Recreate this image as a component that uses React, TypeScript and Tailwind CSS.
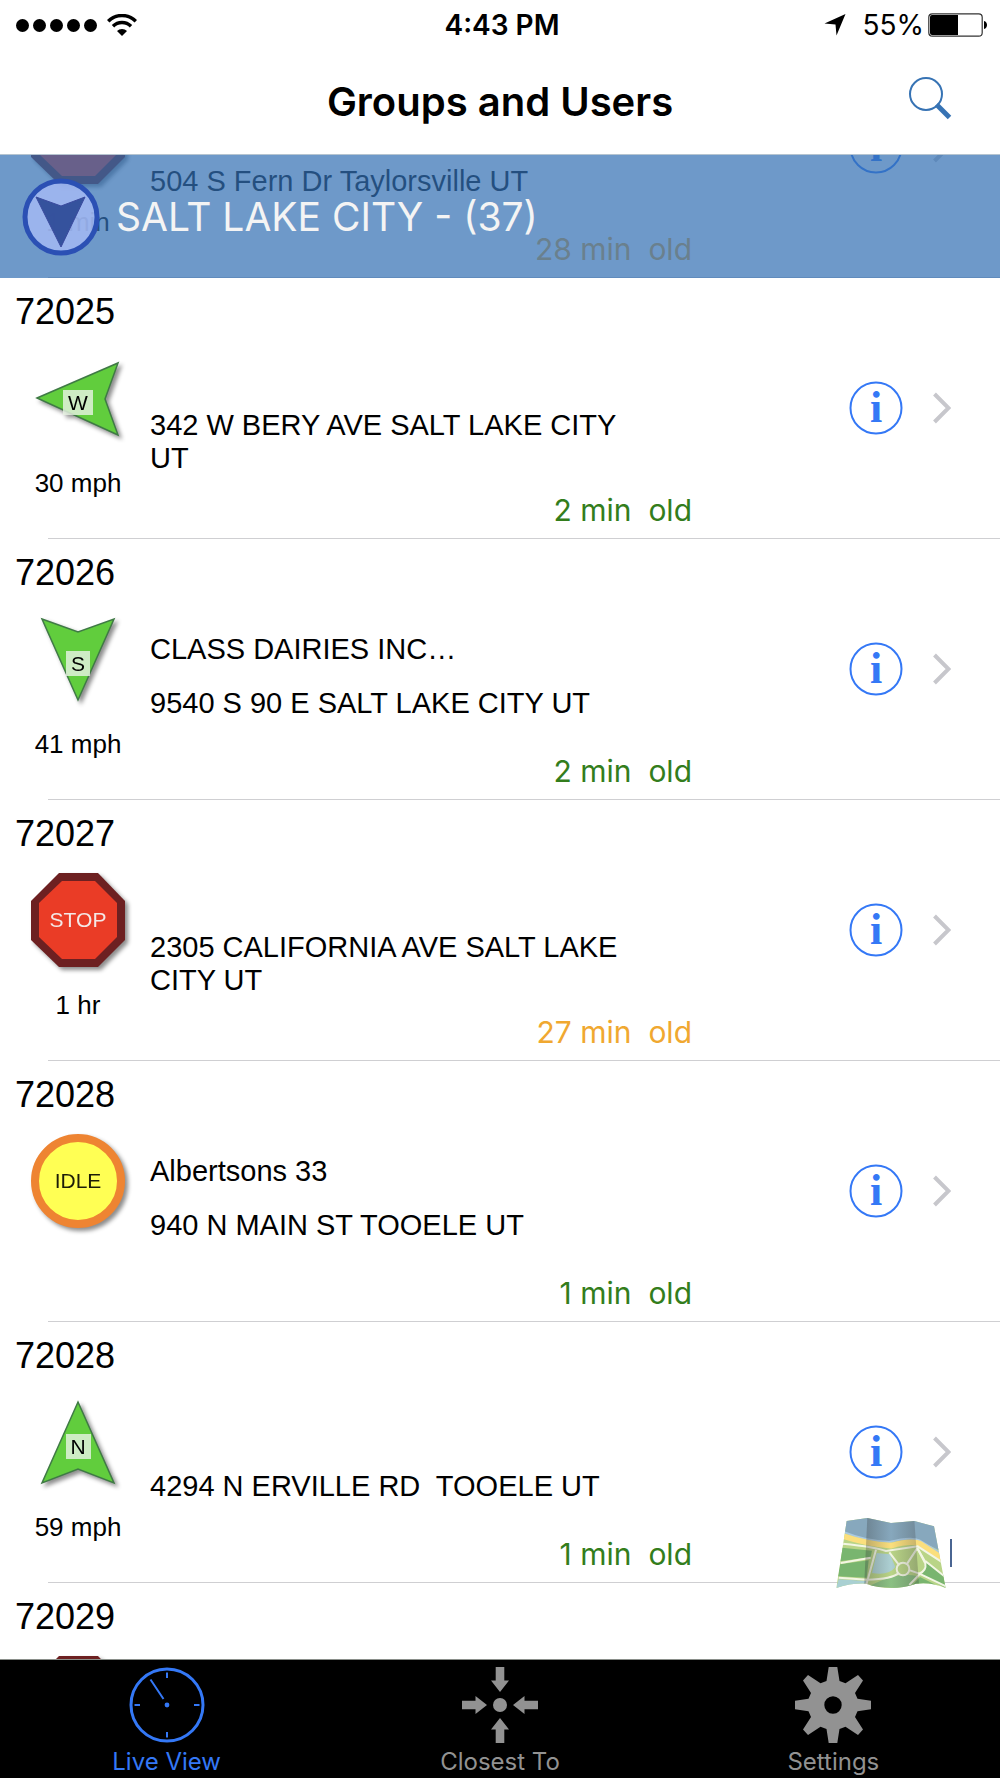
import React from 'react';

type Status = 'north' | 'south' | 'west' | 'stop' | 'idle';

interface Unit {
  id: string;
  status: Status;
  detail?: string;
  place?: string;
  address: string;
  age: string;
  late?: boolean;
}

const units: Unit[] = [
  { id: '72024', status: 'stop', detail: '1 min', address: '504 S Fern Dr Taylorsville UT', age: '28 min', late: true },
  { id: '72025', status: 'west', detail: '30 mph', address: '342 W BERY AVE SALT LAKE CITY UT', age: '2 min' },
  { id: '72026', status: 'south', detail: '41 mph', place: 'CLASS DAIRIES INC…', address: '9540 S 90 E SALT LAKE CITY UT', age: '2 min' },
  { id: '72027', status: 'stop', detail: '1 hr', address: '2305 CALIFORNIA AVE SALT LAKE CITY UT', age: '27 min', late: true },
  { id: '72028', status: 'idle', place: 'Albertsons 33', address: '940 N MAIN ST TOOELE UT', age: '1 min' },
  { id: '72028', status: 'north', detail: '59 mph', address: '4294 N ERVILLE RD  TOOELE UT', age: '1 min' },
  { id: '72029', status: 'stop', address: '', age: '' },
];

const arrows = {
  north: { points: '50,10 86,91 50,77 14,91', letter: 'N', x: 38, w: 25 },
  south: { points: '14,10 50,23 86,10 50,91', letter: 'S', x: 38, w: 24 },
  west: { points: '9,50 90,15 77,51 90,87', letter: 'W', x: 35, w: 30 },
};

const StatusIcon = ({ status }: { status: Status }) => {
  const shape = "size-[100px] drop-shadow-[3px_3px_2px_rgba(0,0,0,0.45)] font-['Liberation_Sans',sans-serif] text-[21px]";

  if (status === 'stop') {
    return (
      <svg viewBox="0 0 100 100" className={shape}>
        <polygon points="31,3 70,3 97,31 97,70 70,97 31,97 3,70 3,31" fill="#6d2021" />
        <polygon points="34,11 67,11 89,33 89,67 67,89 34,89 11,67 11,33" fill="#ea3c26" />
        <text x="50" y="57" textAnchor="middle" fill="#f4e8e6">STOP</text>
      </svg>
    );
  }

  if (status === 'idle') {
    return (
      <svg viewBox="0 0 100 100" className={shape}>
        <circle cx="50" cy="50" r="43" fill="#ffff54" stroke="#ee8432" strokeWidth="8" />
        <text x="50" y="57" textAnchor="middle" fill="#1c1c08">IDLE</text>
      </svg>
    );
  }

  const { points, letter, x, w } = arrows[status];
  return (
    <svg viewBox="0 0 100 100" className={shape}>
      <polygon points={points} fill="#61cd3d" stroke="#3f7a45" strokeWidth="1.5" />
      <rect x={x} y="42" width={w} height="25" fill="#e6f3e2" fillOpacity="0.82" />
      <text x="50" y="62" textAnchor="middle">{letter}</text>
    </svg>
  );
};

const InfoIcon = () => (
  <svg viewBox="0 0 54 54" className="size-[54px] text-[#3478f6]">
    <circle cx="27" cy="27" r="25.5" fill="none" stroke="currentColor" strokeWidth="2" />
    <text x="27" y="41" textAnchor="middle" fill="currentColor" className="font-['Liberation_Serif',serif] text-[44px] font-bold">i</text>
  </svg>
);

const UnitRow = ({ unit }: { unit: Unit }) => (
  <li>
    <div className="flex h-[260px]">
      <div className="w-[150px] shrink-0 pt-[14px]">
        <h2 className="pl-[15px] text-[36px] leading-[40px]">{unit.id}</h2>
        <div className="mt-4 flex flex-col items-center pl-[6px]">
          <StatusIcon status={unit.status} />
          <p className="mt-[19px] text-[26px] leading-[32px]">{unit.detail}</p>
        </div>
      </div>
      <div className="flex min-w-0 flex-1 flex-col pt-[94px] text-[29px] leading-[33px]">
        <p className="h-[33px]">{unit.place}</p>
        <p className="mt-1 flex h-[66px] max-w-[490px] items-center whitespace-pre-wrap">{unit.address}</p>
        {unit.age && (
          <p className={`mt-[17px] text-right font-[Inter,sans-serif] text-[30px] leading-[36px] whitespace-pre ${unit.late ? 'text-[#f0a830]' : 'text-[#337d1c]'}`}>
            {unit.age}{'  '}old
          </p>
        )}
      </div>
      <div className="ml-[157px] flex shrink-0 items-center gap-[30px] pr-[49px]">
        <button type="button" aria-label={`Details for ${unit.id}`}>
          <InfoIcon />
        </button>
        <svg viewBox="0 0 18 32" className="h-[32px] w-[18px]" fill="none" stroke="#c7c7cc" strokeWidth="4">
          <path d="M1.5 2l14 14-14 14" />
        </svg>
      </div>
    </div>
    <div className="ml-12 h-px bg-[#cfcfd2]" />
  </li>
);

const StatusBar = () => (
  <div className="grid h-[50px] grid-cols-[1fr_auto_1fr] items-center pr-3 pl-4 font-[Inter,sans-serif] text-[28px] leading-[32px]">
    <div className="flex items-center gap-[10px]">
      <svg viewBox="0 0 81 13" className="h-[13px] w-[81px]">
        {[6.5, 23.5, 40.5, 57.5, 74.5].map((cx) => <circle key={cx} cx={cx} cy="6.5" r="6.5" />)}
      </svg>
      <svg viewBox="0 0 30 22" className="h-[22px] w-[30px]" fill="none" stroke="black" strokeWidth="3.4">
        <path d="M1.2 7.2a19.5 19.5 0 0 1 27.6 0" />
        <path d="M6 12.3a12.7 12.7 0 0 1 18 0" />
        <path d="M15 22l-5-5a7 7 0 0 1 10 0z" fill="black" stroke="none" />
      </svg>
    </div>
    <div className="text-center font-semibold">4:43 PM</div>
    <div className="flex items-center justify-end">
      <svg viewBox="0 0 22 22" className="mr-4 size-[22px]">
        <path d="M21.5 0L12.5 21.5 11.5 10.5 0.5 9.5z" />
      </svg>
      <span className="mr-1">55%</span>
      <svg viewBox="0 0 60 24" className="h-[24px] w-[60px]">
        <rect x="0.8" y="0.8" width="53.4" height="22.4" rx="3.5" fill="none" stroke="#333" strokeWidth="1.2" />
        <path d="M4 2h26v20H4a2 2 0 0 1-2-2V4a2 2 0 0 1 2-2z" />
        <path d="M56 8c4 1 4 7 0 8z" />
      </svg>
    </div>
  </div>
);

const MapIcon = () => (
  <svg viewBox="0 0 330 216" className="h-[72px] w-[110px]">
    <defs>
      <clipPath id="sheet">
        <path d="M32 12L94 3 165 18 235 12 294 28 329 213 Q285 194 240 200 Q165 226 90 200 Q45 198 1 213z" />
      </clipPath>
      <linearGradient id="foldA" x1="0" x2="1">
        <stop offset="0" stopColor="#333" stopOpacity="0.32" />
        <stop offset="1" stopColor="#333" stopOpacity="0" />
      </linearGradient>
      <linearGradient id="foldB" x1="0" x2="1">
        <stop offset="0" stopColor="#333" stopOpacity="0" />
        <stop offset="1" stopColor="#333" stopOpacity="0.28" />
      </linearGradient>
    </defs>
    <g clipPath="url(#sheet)">
      <rect width="330" height="216" fill="#b9d487" />
      <path d="M20 0H330V110L290 90Q240 62 160 75Q90 70 28 48z" fill="#87a8bd" />
      <path d="M26 46Q90 72 160 75Q225 58 250 70L320 112" fill="none" stroke="#a9c9e0" strokeWidth="6" />
      <path d="M24 58Q90 80 165 86Q230 68 255 82L320 125" fill="none" stroke="#fbdf7d" strokeWidth="17" />
      <path d="M18 92L108 101 104 120 12 133z" fill="#79b56f" />
      <path d="M12 142L98 130 92 182 6 178z" fill="#79b56f" />
      <path d="M8 187L92 192 86 205 0 214z" fill="#a9d0d2" />
      <path d="M122 108L162 112 178 150Q160 176 108 168z" fill="#add0d3" />
      <path d="M270 138L322 172 330 214 258 172z" fill="#79b56f" />
      <path d="M98 208Q190 160 245 178L220 216z" fill="#8bc083" />
      <path d="M252 180L320 214 225 208z" fill="#79b56f" />
      <g fill="none" stroke="#f3f6e4" strokeWidth="6">
        <path d="M20 80Q120 90 150 102L245 88 L325 140" />
        <path d="M14 138L104 122M8 182L92 188 Q170 186 188 168 M120 98L90 206" />
        <path d="M160 106L190 145M245 92L212 142M245 95L268 135M222 160L250 170M250 170L330 208M250 172L220 204" />
        <path d="M245 95Q258 120 268 140Q272 160 250 170M268 132L328 180" />
        <circle cx="201" cy="156" r="19" />
      </g>
      <path d="M94 0L165 16V216H84z" fill="url(#foldA)" />
      <path d="M165 16L235 10 250 216H165z" fill="url(#foldB)" />
    </g>
  </svg>
);

const tabs = [
  {
    label: 'Live View',
    active: true,
    icon: (
      <g fill="none" stroke="currentColor" strokeWidth="2">
        <circle r="36" strokeWidth="3" />
        <path d="M0-32.500v5.500M0 32.500v-5.500M-32.500 0h5.500M32.500 0h-5.500M-16.500-25.500L-3.500-6" />
        <circle r="2.400" fill="currentColor" stroke="none" />
      </g>
    ),
  },
  {
    label: 'Closest To',
    icon: (
      <g fill="currentColor">
        <circle r="7" />
        {[0, 90, 180, 270].map((deg) => (
          <path key={deg} transform={`rotate(${deg})`} d="M-38-4.300H-24.500V-9L-13 0-24.500 9V4.300H-38z" />
        ))}
      </g>
    ),
  },
  {
    label: 'Settings',
    icon: (
      <path
        fill="currentColor"
        fillRule="evenodd"
        d="M-4.300-38H4.300L6.500-24 12.500-21.700 25-30 30-24.500 22-12 24.500-6.300 38-4.300V4.300L24.500 6.300 22 12 30 24.500 25 30 12.500 21.700 6.500 24 4.300 38H-4.300L-6.500 24-12.500 21.700-25 30-30 24.500-22 12-24.500 6.300-38 4.300V-4.300L-24.500-6.300-22-12-30-24.500-25-30-12.500-21.700-6.500-24zM-8.700 0a8.700 8.700 0 1 0 17.400 0a8.700 8.700 0 1 0-17.400 0z"
      />
    ),
  },
];

export default function App() {
  return (
    <div className="flex h-screen flex-col bg-white font-['Liberation_Sans',sans-serif] text-black">
      <header className="border-b border-[#b5c4d0]">
        <StatusBar />
        <div className="grid h-[104px] grid-cols-[1fr_auto_1fr] items-center px-12">
          <h1 className="col-start-2 font-[Inter,sans-serif] text-[40px] font-semibold leading-[48px]">Groups and Users</h1>
          <button type="button" aria-label="Search" className="justify-self-end pb-2">
            <svg viewBox="0 0 44 44" className="size-[44px]" fill="none" stroke="#3773b4">
              <circle cx="18" cy="18" r="16" strokeWidth="2" />
              <path d="M28.500 28.500L41.500 41.500" strokeWidth="5" />
            </svg>
          </button>
        </div>
      </header>

      <main className="relative min-h-0 flex-1 overflow-hidden">
        <ul className="-mt-[138px]">
          {units.map((unit, i) => <UnitRow key={i} unit={unit} />)}
        </ul>

        {/* group header floats over the scrolled rows */}
        <div className="absolute inset-x-0 top-0 flex h-[123px] items-center gap-4 bg-[#3370b3]/71 pl-[22px]">
          <svg viewBox="0 0 78 78" className="size-[78px]">
            <circle cx="39" cy="39" r="36" fill="#a3b8f2" fillOpacity="0.86" stroke="#2b50b4" strokeWidth="5" />
            <polygon points="14,19 39,28 63,19 39,69" fill="#2f4b98" fillOpacity="0.94" stroke="#3a4a9e" strokeWidth="1" />
          </svg>
          <span className="font-[Inter,sans-serif] text-[39px] leading-[48px] text-[#f4f4f4]">SALT LAKE CITY - (37)</span>
        </div>

        <button type="button" aria-label="Show map" className="absolute right-12 bottom-[70px] flex items-center gap-1">
          <MapIcon />
          <span className="h-[28px] w-[2px] bg-[#4a6592]" />
        </button>
      </main>

      <nav className="grid h-[119px] shrink-0 grid-cols-3 border-t border-[#8a8f8a] bg-black">
        {tabs.map((tab) => (
          <button
            key={tab.label}
            type="button"
            className={`flex flex-col items-center pt-[7px] font-[Inter,sans-serif] text-[24px] leading-[30px] ${tab.active ? 'text-[#3478f6]' : 'text-[#929292]'}`}
          >
            <svg viewBox="-38 -38 76 76" className="size-[76px]">{tab.icon}</svg>
            <span className="mt-1">{tab.label}</span>
          </button>
        ))}
      </nav>
    </div>
  );
}
